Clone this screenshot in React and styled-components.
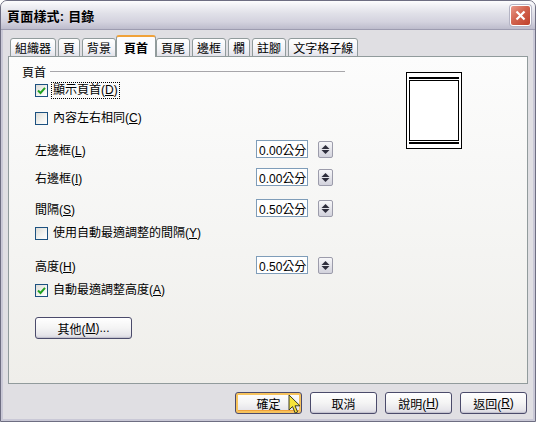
import styled, { createGlobalStyle } from "styled-components";

const GlobalStyle = createGlobalStyle`
  html, body {
    margin: 0;
    padding: 0;
    background: #ffffff;
  }
  body {
    font-family: "Liberation Sans", "Noto Sans CJK TC", sans-serif;
    font-size: 12px;
    color: #000;
  }
`;

const Window = styled.div`
  position: relative;
  width: 536px;
  height: 422px;
  box-sizing: border-box;
  border: 1px solid #6e6e82;
  border-radius: 7px 7px 0 0;
  background: #e0dfe3;
  box-shadow: inset 0 0 0 2px #c9c8d6;
  display: flex;
  flex-direction: column;
  overflow: hidden;
`;

const TitleBar = styled.div`
  height: 28px;
  flex: none;
  display: flex;
  align-items: center;
  justify-content: space-between;
  padding: 0 4px 0 6px;
  background: linear-gradient(
    to bottom,
    #fdfdfe 0%,
    #f0f0f4 18%,
    #e0e0e8 45%,
    #d3d2de 75%,
    #bdbccc 100%
  );
  border-bottom: 1px solid #9d9cb0;
`;

const Title = styled.span`
  font-weight: bold;
  font-size: 13px;
  color: #000;
  letter-spacing: 0.2px;
`;

const CloseButton = styled.div`
  width: 21px;
  height: 21px;
  box-sizing: border-box;
  border: 1px solid #ffffff;
  border-radius: 3px;
  background: linear-gradient(135deg, #e99a8a 0%, #d2644f 45%, #c0402b 100%);
  display: flex;
  align-items: center;
  justify-content: center;
  box-shadow: 0 0 0 1px #b4b4c4;
`;

const Body = styled.div`
  flex: 1;
  padding: 5px 0 0 7px;
  display: flex;
  flex-direction: column;
`;

const TabRow = styled.div`
  display: flex;
  align-items: flex-end;
  height: 22px;
  padding-left: 2px;
  position: relative;
  z-index: 1;
  margin-bottom: -1px;
`;

const Tab = styled.div`
  box-sizing: border-box;
  height: ${(p) => (p.$active ? "22px" : "19px")};
  padding: 0 ${(p) => (p.$active ? "7px" : "4px")};
  margin-right: ${(p) => (p.$active ? "0" : "2px")};
  margin-left: ${(p) => (p.$active ? "-2px" : "0")};
  border: 1px solid #919b9c;
  border-bottom: ${(p) => (p.$active ? "none" : "1px solid #919b9c")};
  border-top: ${(p) => (p.$active ? "2px solid #f0a23a" : "1px solid #919b9c")};
  border-radius: 3px 3px 0 0;
  background: ${(p) =>
    p.$active
      ? "#fcfcfe"
      : "linear-gradient(to bottom, #ffffff 0%, #f3f3f7 60%, #e3e3ea 100%)"};
  font-weight: ${(p) => (p.$active ? "bold" : "normal")};
  display: flex;
  align-items: center;
  white-space: nowrap;
`;

const Panel = styled.div`
  width: 520px;
  height: 328px;
  box-sizing: border-box;
  border: 1px solid #919b9c;
  background: linear-gradient(to bottom, #fcfcfc 0%, #f4f4f2 60%, #efeeea 100%);
  display: flex;
  padding: 7px 0 0 13px;
`;

const LeftCol = styled.div`
  width: 340px;
  display: flex;
  flex-direction: column;
`;

const GroupHeader = styled.div`
  height: 14px;
  display: flex;
  align-items: center;
  gap: 4px;
`;

const GroupLine = styled.div`
  flex: 1;
  height: 1px;
  background: #a7a6aa;
  margin-right: 17px;
`;

const Row = styled.div`
  height: ${(p) => p.$h || 18}px;
  margin-top: ${(p) => p.$mt || 0}px;
  padding-left: 13px;
  display: flex;
  align-items: center;
`;

const Box = styled.span`
  width: 13px;
  height: 13px;
  box-sizing: border-box;
  border: 1px solid #1c5180;
  background: linear-gradient(135deg, #dcdcd7 0%, #f4f4f1 60%, #ffffff 100%);
  display: flex;
  align-items: center;
  justify-content: center;
  flex: none;
`;

const CheckText = styled.span`
  margin-left: 3px;
  padding: 0 1px;
  line-height: 15px;
  border: 1px ${(p) => (p.$focus ? "dotted #000" : "solid transparent")};
`;

const Label = styled.span`
  width: 221px;
  flex: none;
`;

const Field = styled.div`
  width: 52px;
  height: 18px;
  box-sizing: border-box;
  border: 1px solid #7f9db9;
  background: #ffffff;
  display: flex;
  align-items: center;
  padding-left: 2px;
  font-size: 12px;
`;

const Spin = styled.div`
  margin-left: 10px;
  width: 15px;
  height: 17px;
  box-sizing: border-box;
  border: 1px solid #9c9cab;
  border-radius: 2px;
  background: linear-gradient(to bottom, #f7f7f9, #d2d2dc);
  display: flex;
  align-items: center;
  justify-content: center;
`;

const PushButton = styled.div`
  width: ${(p) => p.$w || 67}px;
  height: 22px;
  box-sizing: border-box;
  border: 1px solid #4b4b6b;
  border-radius: 3px;
  background: linear-gradient(to bottom, #ffffff 0%, #f4f4f4 50%, #e6e5ea 85%, #d4d3dc 100%);
  box-shadow: ${(p) =>
    p.$default ? "inset 0 0 0 2px #f6c35d, inset 0 -2px 0 1px #f2a33a" : "inset 0 -1px 0 #c4c3cf"};
  display: flex;
  align-items: center;
  justify-content: center;
  font-size: 12px;
  flex: none;
`;

const Preview = styled.div`
  margin: 8px 0 0 44px;
  width: 56px;
  height: 77px;
  box-sizing: border-box;
  border: 1px solid #000;
  background: #fff;
  padding: 4px 2px 4px 2px;
  display: flex;
  flex-direction: column;
`;

const PageLine = styled.div`
  height: 2px;
  background: #000;
  flex: none;
`;

const PageBody = styled.div`
  flex: 1;
  margin: 1px 0;
  border: 1px solid #000;
`;

const ButtonRow = styled.div`
  display: flex;
  justify-content: flex-end;
  gap: 8px;
  margin-top: 8px;
  width: 519px;
  position: relative;
`;

const Cursor = styled.svg`
  position: absolute;
  left: 280px;
  top: 2px;
`;

const U = styled.span`
  text-decoration: underline;
`;

const Check = () => (
  <svg width="9" height="9" viewBox="0 0 9 9">
    <path d="M1 4.5 L3.5 7 L8 1.8" stroke="#21a121" strokeWidth="2" fill="none" />
  </svg>
);

const Checkbox = ({ checked, focus, children, mt }) => (
  <Row $mt={mt}>
    <Box>{checked && <Check />}</Box>
    <CheckText $focus={focus}>{children}</CheckText>
  </Row>
);

const Measure = ({ label, value, mt }) => (
  <Row $mt={mt}>
    <Label>{label}</Label>
    <Field>{value}</Field>
    <Spin>
      <svg width="9" height="11" viewBox="0 0 9 11">
        <path d="M0.5 5 L4.5 1 L8.5 5 Z" fill="#2e2e3c" />
        <path d="M0.5 6 L4.5 10 L8.5 6 Z" fill="#2e2e3c" />
      </svg>
    </Spin>
  </Row>
);

const tabs = ["組織器", "頁", "背景", "頁首", "頁尾", "邊框", "欄", "註腳", "文字格子線"];

export default function App() {
  return (
    <>
      <GlobalStyle />
      <Window>
        <TitleBar>
          <Title>頁面樣式: 目錄</Title>
          <CloseButton>
            <svg width="11" height="11" viewBox="0 0 11 11">
              <path d="M1.5 1.5 L9.5 9.5 M9.5 1.5 L1.5 9.5" stroke="#fff" strokeWidth="2.2" />
            </svg>
          </CloseButton>
        </TitleBar>
        <Body>
          <TabRow>
            {tabs.map((t) => (
              <Tab key={t} $active={t === "頁首"}>
                {t}
              </Tab>
            ))}
          </TabRow>
          <Panel>
            <LeftCol>
              <GroupHeader>
                <span>頁首</span>
                <GroupLine />
              </GroupHeader>
              <Checkbox checked focus mt={3}>
                顯示頁首(<U>D</U>)
              </Checkbox>
              <Checkbox mt={10}>
                內容左右相同(<U>C</U>)
              </Checkbox>
              <Measure mt={13} label={<>左邊框(<U>L</U>)</>} value="0.00公分" />
              <Measure mt={10} label={<>右邊框(<U>I</U>)</>} value="0.00公分" />
              <Measure mt={13} label={<>間隔(<U>S</U>)</>} value="0.50公分" />
              <Checkbox mt={7}>
                使用自動最適調整的間隔(<U>Y</U>)
              </Checkbox>
              <Measure mt={14} label={<>高度(<U>H</U>)</>} value="0.50公分" />
              <Checkbox checked mt={7}>
                自動最適調整高度(<U>A</U>)
              </Checkbox>
              <Row $mt={18} $h={22}>
                <PushButton $w={97}>
                  其他(<U>M</U>)...
                </PushButton>
              </Row>
            </LeftCol>
            <Preview>
              <PageLine />
              <PageBody />
              <PageLine />
            </Preview>
          </Panel>
          <ButtonRow>
            <PushButton $default>確定</PushButton>
            <PushButton>取消</PushButton>
            <PushButton>
              說明(<U>H</U>)
            </PushButton>
            <PushButton>
              返回(<U>R</U>)
            </PushButton>
            <Cursor width="14" height="21" viewBox="0 0 14 21">
              <path
                d="M1 1 L1 16 L4.5 12.5 L7.2 19 L9.6 18 L7 11.8 L12 11.8 Z"
                fill="#f7e43a"
                stroke="#3a3a2a"
                strokeWidth="1"
                strokeLinejoin="round"
              />
            </Cursor>
          </ButtonRow>
        </Body>
      </Window>
    </>
  );
}
